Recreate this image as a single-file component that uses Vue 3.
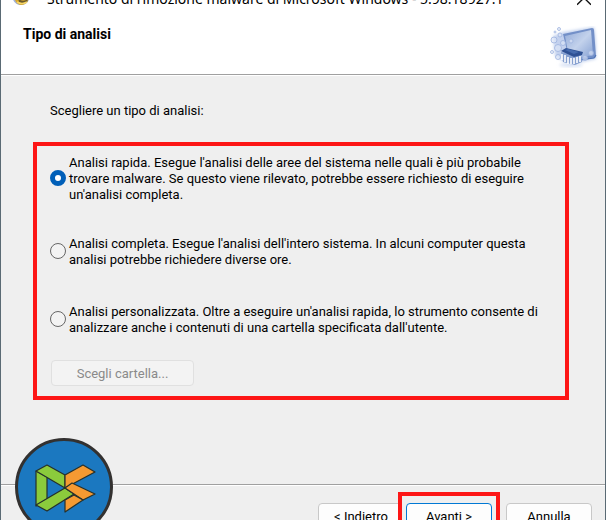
<script setup>
import { ref } from 'vue'

const scanType = ref('quick')
const options = [
  {
    id: 'quick',
    lines: [
      "Analisi rapida. Esegue l'analisi delle aree del sistema nelle quali è più probabile",
      'trovare malware. Se questo viene rilevato, potrebbe essere richiesto di eseguire',
      "un'analisi completa."
    ]
  },
  {
    id: 'full',
    lines: [
      "Analisi completa. Esegue l'analisi dell'intero sistema. In alcuni computer questa",
      'analisi potrebbe richiedere diverse ore.'
    ]
  },
  {
    id: 'custom',
    lines: [
      "Analisi personalizzata. Oltre a eseguire un'analisi rapida, lo strumento consente di",
      "analizzare anche i contenuti di una cartella specificata dall'utente."
    ]
  }
]
</script>

<template>
  <div class="window">
    <header class="titlebar">
      <svg class="app-icon" viewBox="0 3 20 20" aria-hidden="true">
        <path d="M1 9 Q2 19 10 19 Q18 19 19 9Z" fill="#9fb0d8" />
        <path d="M4 9 L17 9 Q19 17 11 19 Q6 19 4 14Z" fill="#d9a92c" />
        <path d="M7 12 Q11 17 17 13 L16 16 Q11 18 8 16Z" fill="#6b5a2a" />
        <path d="M6 16 Q11 19 16 16" fill="none" stroke="#f6d667" stroke-width="1.5" />
      </svg>
      <span class="app-title">Strumento di rimozione malware di Microsoft Windows - 5.98.18927.1</span>
      <button class="close" type="button" aria-label="Chiudi">
        <svg viewBox="0 0 12 12"><path d="M0 -1 L12 11 M12 -1 L0 11" stroke="#111" stroke-width="1.2" /></svg>
      </button>
    </header>

    <div class="banner">
      <h1>Tipo di analisi</h1>
      <svg class="banner-art" viewBox="0 0 50 44" aria-hidden="true">
        <defs>
          <linearGradient id="screen" x1="0" y1="0" x2="1" y2="1">
            <stop offset="0" stop-color="#93abd8" />
            <stop offset="0.5" stop-color="#c3d2ec" />
            <stop offset="1" stop-color="#86a1d3" />
          </linearGradient>
          <filter id="glow" x="-20%" y="-20%" width="140%" height="140%">
            <feGaussianBlur stdDeviation="1.5" />
          </filter>
        </defs>
        <path d="M4 10 L14 6 L45 1 Q48 18 47 33 L20 39 L6 30 Z" fill="#c3d1ee" filter="url(#glow)" />
        <ellipse cx="22" cy="39" rx="12" ry="2" fill="#dbe4f5" filter="url(#glow)" />
        <path d="M14 8 L43 2 Q45 2 45 4 L47 30 Q47 32 45 32 L30 35 L19 29 Z" fill="#7390c8" />
        <path d="M16 10 L42 4 L44 29 L29 32 L19 26 Z" fill="url(#screen)" />
        <path d="M30 34 L45 32 L47 29" fill="none" stroke="#4f74b6" stroke-width="1.2" />
        <g fill="#dfe8f8" fill-opacity="0.6" stroke="#9db3de" stroke-width="0.8">
          <circle cx="5" cy="14" r="3" /><circle cx="11" cy="9" r="2" /><circle cx="10" cy="3" r="1.5" />
          <circle cx="9" cy="22" r="3.5" /><circle cx="3" cy="26" r="1.5" /><circle cx="14" cy="17" r="2.5" />
          <circle cx="22" cy="15" r="2" /><circle cx="42" cy="27" r="2.5" /><circle cx="6" cy="6" r="1" />
          <circle cx="9" cy="31" r="2.5" /><circle cx="36" cy="32" r="2.5" />
        </g>
        <path d="M12 26 L32 29 L33 36 L26 39 L14 36 Z" fill="#86a0d0" />
        <path d="M12 25 L17 22 L34 26 L33 29 L25 31 Z" fill="#2f5194" />
        <path d="M16 24 L19 23 L30 26 L25 28 Z" fill="#456aad" />
        <path d="M13 28 V34 M16 29 V36 M19 31 V38 M22 32 V38 M25 32 V38 M28 31 V37 M31 30 V36" stroke="#fff" stroke-width="1.6" />
      </svg>
    </div>

    <main class="body">
      <p class="prompt">Scegliere un tipo di analisi:</p>
      <fieldset class="options" aria-label="Tipo di analisi">
        <label v-for="o in options" :key="o.id" class="option">
          <input v-model="scanType" type="radio" name="scan" :value="o.id" />
          <span class="text"><span v-for="line in o.lines" :key="line" class="line">{{ line }}</span></span>
        </label>
        <button class="btn folder" type="button" :disabled="scanType !== 'custom'">Scegli cartella...</button>
      </fieldset>
    </main>

    <footer class="actions">
      <button class="btn" type="button">&lt; Indietro</button>
      <div class="next">
        <button class="btn primary" type="button">Avanti &gt;</button>
      </div>
      <button class="btn" type="button">Annulla</button>
    </footer>

    <svg class="logo" viewBox="0 0 98 98" aria-hidden="true">
      <circle cx="49" cy="49" r="47.500" fill="#1b78c0" stroke="#333130" stroke-width="3" />
      <g stroke="#26302b" stroke-width="1.200" stroke-linejoin="round">
        <path d="M21 33 L32 39 V61 L21 68 Z" fill="#8bcb3c" />
        <path d="M21 33 L32 27 L50 37 V50 Z" fill="#8bcb3c" />
        <path d="M21 67 L50 50 L59 56 L32 73 Z" fill="#8bcb3c" />
        <path d="M50 37 L68 27 L80 34 L50 50 Z" fill="#f59a32" />
        <path d="M50 50 L57 45 L80 56 L68 62 Z" fill="#f59a32" />
        <path d="M50 62 L59 57 L68 62 L50 74 Z" fill="#f59a32" />
      </g>
    </svg>
  </div>
</template>

<style>
body {
  margin: 0;
}
</style>

<style scoped>
.window {
  position: relative;
  box-sizing: border-box;
  display: flex;
  flex-direction: column;
  height: 100vh;
  overflow: hidden;
  border: solid #5a6a74;
  border-width: 0 1px;
  background: #efefef;
  color: #000;
  font: 13px/16px Roboto, sans-serif;
}
.titlebar {
  display: flex;
  align-items: center;
  flex: none;
  height: 26px;
  margin-top: -14px;
  padding: 0 14px 0 10px;
  background: #fff;
}
.app-icon {
  width: 20px;
  height: 20px;
  margin-right: 16px;
}
.app-title {
  flex: 1;
  white-space: nowrap;
  font: 14px/20px "Noto Sans", sans-serif;
}
.close {
  display: flex;
  padding: 0;
  border: 0;
  background: none;
}
.close svg {
  width: 14px;
  height: 14px;
}
.banner {
  display: flex;
  justify-content: space-between;
  flex: none;
  box-sizing: border-box;
  height: 63px;
  padding: 14px 6px 0 22px;
  border-bottom: 1px solid #a0a0a0;
  background: #fff;
}
h1 {
  margin: 0;
  font-size: 14px;
  line-height: 16px;
}
.banner-art {
  width: 50px;
  height: 44px;
}
.body {
  flex: 1;
  padding: 27px 36px 0 32px;
  border-top: 1px solid #fff;
}
.prompt {
  margin: 0 0 23px 17px;
}
.options {
  display: flex;
  flex-direction: column;
  margin: 0;
  padding: 7px 14px 10px 13px;
  border: 4px solid #fd1616;
}
.option {
  display: flex;
  align-items: center;
  gap: 3px;
  margin-bottom: 31px;
}
.option + .option {
  margin-bottom: 34px;
}
.option + .option + .option {
  margin-bottom: 24px;
}
.text {
  padding-top: 2px;
}
.line {
  display: block;
  white-space: nowrap;
}
input {
  appearance: none;
  flex: none;
  box-sizing: border-box;
  width: 16px;
  height: 16px;
  margin: 0;
  border: 1px solid #666;
  border-radius: 50%;
  background: #f3f3f3;
}
input:checked {
  border: 5px solid #005fb8;
  background: #fff;
}
.btn {
  box-sizing: border-box;
  width: 86px;
  height: 26px;
  padding: 1px 0 0;
  border: 1px solid #c8c8c8;
  border-radius: 4px;
  background: #fdfdfd;
  color: #000;
  font: inherit;
}
.btn:disabled {
  border-color: #e0e0e0;
  background: #f3f3f3;
  color: #8a8a8a;
}
.folder {
  width: 143px;
  margin-left: 1px;
}
.actions {
  display: flex;
  justify-content: flex-end;
  flex: none;
  box-sizing: border-box;
  height: 36px;
  padding: 18px 13px 0;
  border-top: 1px solid #a0a0a0;
  box-shadow: inset 0 1px #fff;
}
.actions .btn {
  flex: none;
}
.next {
  flex: none;
  box-sizing: border-box;
  height: 44px;
  margin: -11px 6px 0 -6px;
  padding: 7px 4px;
  border: 4px solid #fd1616;
  background: #efefef;
}
.primary {
  border-color: #0078d4;
}
.logo {
  position: absolute;
  left: 14px;
  bottom: -16px;
  width: 98px;
  height: 98px;
}
</style>
